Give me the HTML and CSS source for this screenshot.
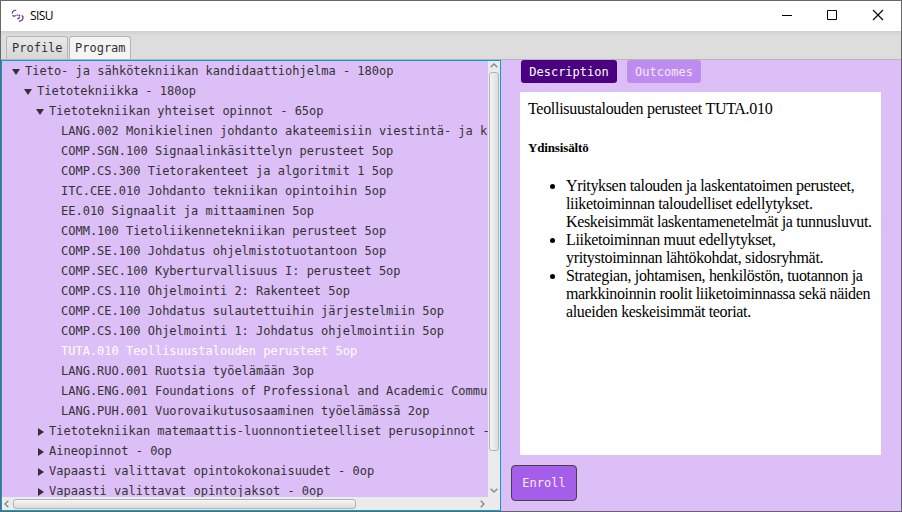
FILE: index.html
```html
<!DOCTYPE html>
<html lang="fi">
<head>
<meta charset="utf-8">
<title>SISU</title>
<link rel="stylesheet" href="styles.css">
</head>
<body>
<div class="window">
  <header class="titlebar">
    <svg class="logo" width="14" height="14" viewBox="0 0 14 14"><path d="M5.2 1.3C3 1 1 2.2 1.3 4.6M1.5 6.2C2.2 7.4 3.6 7.4 4.8 6.6M6.2 5.4V7M7.6 6.4H9.2M10.6 6.6C13 7.6 12.6 11.6 8 12.4M8.4 7.4C8.4 9 8 9.8 6.4 9.8"/></svg>
    <span class="title">SISU</span>
    <svg class="controls" width="104" height="12" viewBox="0 0 104 12"><path d="M0 6.5H10M45.5 1.5H54.5V10.5H45.5Z"/><path class="cross" d="M91 1L101 11M101 1L91 11"/></svg>
  </header>
  <nav class="tabs">
    <div class="tab profile">Profile</div>
    <div class="tab active">Program</div>
  </nav>
  <main class="content">
    <section class="tree">
      <div class="rows">
        <div class="row l0"><i class="open"></i>Tieto- ja sähkötekniikan kandidaattiohjelma - 180op</div>
        <div class="row l1"><i class="open"></i>Tietotekniikka - 180op</div>
        <div class="row l2"><i class="open"></i>Tietotekniikan yhteiset opinnot - 65op</div>
        <div class="row l3">LANG.002 Monikielinen johdanto akateemisiin viestintä- ja k</div>
        <div class="row l3">COMP.SGN.100 Signaalinkäsittelyn perusteet 5op</div>
        <div class="row l3">COMP.CS.300 Tietorakenteet ja algoritmit 1 5op</div>
        <div class="row l3">ITC.CEE.010 Johdanto tekniikan opintoihin 5op</div>
        <div class="row l3">EE.010 Signaalit ja mittaaminen 5op</div>
        <div class="row l3">COMM.100 Tietoliikennetekniikan perusteet 5op</div>
        <div class="row l3">COMP.SE.100 Johdatus ohjelmistotuotantoon 5op</div>
        <div class="row l3">COMP.SEC.100 Kyberturvallisuus I: perusteet 5op</div>
        <div class="row l3">COMP.CS.110 Ohjelmointi 2: Rakenteet 5op</div>
        <div class="row l3">COMP.CE.100 Johdatus sulautettuihin järjestelmiin 5op</div>
        <div class="row l3">COMP.CS.100 Ohjelmointi 1: Johdatus ohjelmointiin 5op</div>
        <div class="row l3 selected">TUTA.010 Teollisuustalouden perusteet 5op</div>
        <div class="row l3">LANG.RUO.001 Ruotsia työelämään 3op</div>
        <div class="row l3">LANG.ENG.001 Foundations of Professional and Academic Commu</div>
        <div class="row l3">LANG.PUH.001 Vuorovaikutusosaaminen työelämässä 2op</div>
        <div class="row l2"><i class="closed"></i>Tietotekniikan matemaattis-luonnontieteelliset perusopinnot -</div>
        <div class="row l2"><i class="closed"></i>Aineopinnot - 0op</div>
        <div class="row l2"><i class="closed"></i>Vapaasti valittavat opintokokonaisuudet - 0op</div>
        <div class="row l2"><i class="closed"></i>Vapaasti valittavat opintojaksot - 0op</div>
      </div>
      <div class="vbar">
        <svg width="8" height="5" viewBox="0 0 8 5"><path d="M.7 4.3L4 1L7.3 4.3"/></svg>
        <div class="vthumb"></div>
        <svg width="8" height="5" viewBox="0 0 8 5"><path d="M.7 .7L4 4L7.3 .7"/></svg>
      </div>
      <div class="hbar">
        <svg width="5" height="8" viewBox="0 0 5 8"><path d="M4.3 .7L1 4L4.3 7.3"/></svg>
        <div class="hthumb"></div>
        <svg width="5" height="8" viewBox="0 0 5 8"><path d="M.7 .7L4 4L.7 7.3"/></svg>
      </div>
    </section>
    <section class="details">
      <div class="switch">
        <button class="pill chosen">Description</button>
        <button class="pill">Outcomes</button>
      </div>
      <article class="page">
        <p>Teollisuustalouden perusteet TUTA.010</p>
        <h5>Ydinsisältö</h5>
        <ul>
          <li>Yrityksen talouden ja laskentatoimen perusteet,<br>liiketoiminnan taloudelliset edellytykset.<br>Keskeisimmät laskentamenetelmät ja tunnusluvut.</li>
          <li>Liiketoiminnan muut edellytykset,<br>yritystoiminnan lähtökohdat, sidosryhmät.</li>
          <li>Strategian, johtamisen, henkilöstön, tuotannon ja<br>markkinoinnin roolit liiketoiminnassa sekä näiden<br>alueiden keskeisimmät teoriat.</li>
        </ul>
      </article>
      <button class="enroll">Enroll</button>
    </section>
  </main>
</div>
</body>
</html>
```
FILE: styles.css
```css
* { box-sizing: border-box; }
body { margin: 0; overflow: hidden; }
.window {
  width: 902px; height: 512px;
  border: 1px solid #69666a;
  display: flex; flex-direction: column;
  background: #dcbff7;
  font: 12px/20px "DejaVu Sans Mono", monospace;
  color: #333;
}
.titlebar { height: 30px; flex: none; background: #fff; display: flex; align-items: center; padding: 0 15px 2px 10px; }
.logo { fill: none; stroke: #61358c; stroke-width: 1.2; position: relative; top: 1px; }
.title { font: 12px/16px "Open Sans", sans-serif; color: #000; margin: 2px 0 0 5px; flex: 1; letter-spacing: -.6px; }
.controls { fill: none; stroke: #000; stroke-width: 1; }
.cross { stroke-width: 1.1; }
.tabs {
  height: 29px; flex: none; display: flex; align-items: flex-end; gap: 1px; padding-left: 5px;
  background: linear-gradient(#d0d0d0, #ddd 5px);
  border-bottom: 1px solid #b5b5b5;
}
.tab {
  height: 23px; line-height: 22px; width: 62px; padding-left: 5px; white-space: nowrap;
  border: 1px solid #b5b5b5; border-bottom: 0; border-radius: 3px 3px 0 0;
  background: linear-gradient(#eaeaea, #d6d6d6);
}
.tab.active { background: #f4f4f4; }
.content { flex: 1; min-height: 0; display: flex; }
.tree {
  width: 500px; flex: none; border: 1px solid #039ed3;
  display: grid; grid-template: minmax(0, 1fr) 13px / minmax(0, 1fr) 12px;
}
.rows { overflow: hidden; }
.row { height: 20px; display: flex; align-items: center; white-space: pre; }
.l0 { padding-left: 10px; }
.l1 { padding-left: 22px; }
.l2 { padding-left: 34px; }
.l3 { padding-left: 59px; }
.selected { color: #fff; }
.open { border: 4px solid transparent; border-top: 6px solid #333; border-bottom: 0; margin: 1px 5px 0 0; }
.closed { border: 4px solid transparent; border-left: 6px solid #333; border-right: 0; margin: 2px 5px 0 2px; }
.vbar, .hbar { background: #ebebeb; display: flex; align-items: center; }
.vbar { flex-direction: column; padding: 2px 0 4px; }
.vbar svg, .hbar svg { fill: none; stroke: #858585; stroke-width: 1.3; flex: none; }
.vthumb { width: 10px; height: 379px; margin: 4px 0 auto; background: linear-gradient(90deg, #f5f5f5, #ddd); border: 1px solid #b2b2b2; border-radius: 3px; }
.hbar { grid-column: 1 / -1; padding: 0 15px 0 2px; }
.hthumb { width: 343px; height: 10px; margin: 0 auto 0 4px; background: linear-gradient(#f5f5f5, #ddd); border: 1px solid #b2b2b2; border-radius: 3px; }
.details { flex: 1; padding-left: 10px; display: flex; flex-direction: column; align-items: flex-start; }
button { font: inherit; color: #fff; border: 0; padding: 0; }
.switch { display: flex; gap: 10px; padding-left: 10px; }
.pill { height: 23px; line-height: 22px; width: 74px; background: #be8cf0; border-radius: 3px; color: #f3e9fc; }
.pill.chosen { width: 96px; background: #4b0082; color: #fff; }
.page {
  width: 361px; height: 363px; margin: 9px 0 10px 9px; padding: 8px; background: #fff;
  color: #000; font: 16px/18px "Liberation Serif", serif; letter-spacing: -.3px;
}
.page p { margin: 0; }
.page h5 { font-size: 13px; line-height: 14px; letter-spacing: -.15px; margin: 23px 0 22px; }
.page ul { margin: 0; padding-left: 38px; white-space: nowrap; letter-spacing: -.34px; }
.enroll { width: 66px; height: 36px; background: #a55eea; border: 1px solid #444; border-radius: 4px; color: #f6edfd; }
```
